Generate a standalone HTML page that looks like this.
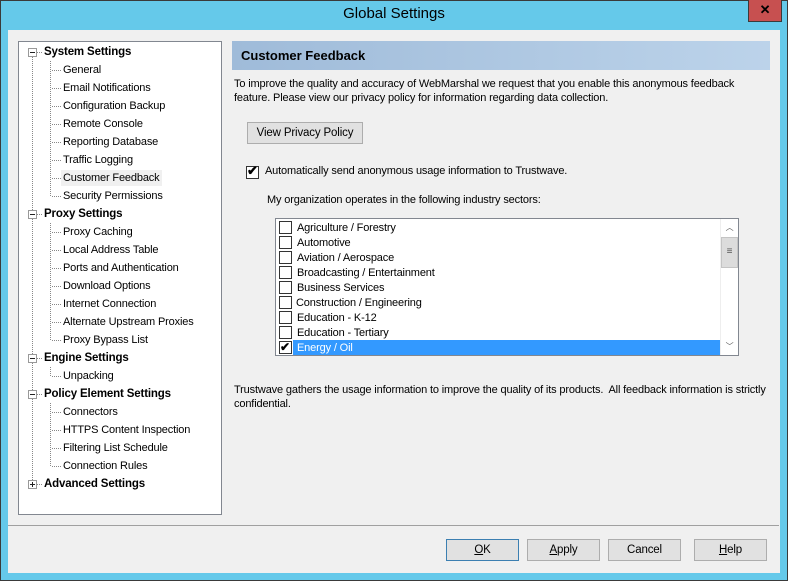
<!DOCTYPE html><html><head><style>
*{margin:0;padding:0;box-sizing:border-box}
body{width:788px;height:581px;overflow:hidden;background:#65c9ea;font-family:"Liberation Sans",sans-serif;font-size:11px;letter-spacing:-0.15px;color:#000;position:relative}
.a{position:absolute;white-space:nowrap}
.win{position:absolute;left:0;top:0;width:788px;height:581px;border:1px solid #3a3a3a}
.title{left:0;top:5px;width:788px;text-align:center;font-size:15px;letter-spacing:0}
.client{left:8px;top:30px;width:772px;height:543px;background:#f0f0f0}
.tree{left:18px;top:41px;width:204px;height:474px;background:#fff;border:1px solid #828790}
.ti{height:16px;line-height:16px}
.b{font-weight:bold;font-size:11.5px}
.btn{position:absolute;height:22px;background:#e1e1e1;border:1px solid #adadad;text-align:center;line-height:20px;font-size:11.5px}
.cb{position:absolute;width:13px;height:13px;border:1px solid #333;background:#fff}
.row{position:absolute;left:0;height:15px;line-height:16px;width:445px}
.row span{position:absolute;left:20px}
</style></head><body>
<div class="win"></div>
<div class="a title">Global Settings</div>
<div class="a" style="left:748px;top:0;width:34px;height:22px;background:#c75050;border:1px solid #3a3a3a;border-top:none;color:#000;text-align:center;font-weight:bold;font-size:13px;line-height:20px">✕</div>
<div class="a client"></div>
<div class="a tree"></div>
<svg class="a" style="left:18px;top:41px" width="204" height="474">
<g stroke="#888" stroke-dasharray="1,1" fill="none">
<line x1="14.5" y1="16" x2="14.5" y2="443"/>
<line x1="32.5" y1="20" x2="32.5" y2="155"/>
<line x1="32.5" y1="182" x2="32.5" y2="299"/>
<line x1="32.5" y1="326" x2="32.5" y2="335"/>
<line x1="32.5" y1="362" x2="32.5" y2="425"/>
</g>
<g stroke="#888" stroke-dasharray="1,1">
<line x1="19" y1="11.5" x2="25" y2="11.5"/><line x1="19" y1="173.5" x2="25" y2="173.5"/><line x1="19" y1="317.5" x2="25" y2="317.5"/><line x1="19" y1="353.5" x2="25" y2="353.5"/><line x1="19" y1="443.5" x2="25" y2="443.5"/>
</g>
<g fill="#fff" stroke="#999">
<rect x="10.5" y="7.5" width="8" height="8"/><rect x="10.5" y="169.5" width="8" height="8"/><rect x="10.5" y="313.5" width="8" height="8"/><rect x="10.5" y="349.5" width="8" height="8"/><rect x="10.5" y="439.5" width="8" height="8"/>
</g>
<g stroke="#222"><line x1="12" y1="11.5" x2="17" y2="11.5"/><line x1="12" y1="173.5" x2="17" y2="173.5"/><line x1="12" y1="317.5" x2="17" y2="317.5"/><line x1="12" y1="353.5" x2="17" y2="353.5"/><line x1="12" y1="443.5" x2="17" y2="443.5"/><line x1="14.5" y1="441" x2="14.5" y2="446"/></g>
<g stroke="#888" stroke-dasharray="1,1">
<line x1="34" y1="29.5" x2="43" y2="29.5"/><line x1="34" y1="47.5" x2="43" y2="47.5"/><line x1="34" y1="65.5" x2="43" y2="65.5"/><line x1="34" y1="83.5" x2="43" y2="83.5"/><line x1="34" y1="101.5" x2="43" y2="101.5"/><line x1="34" y1="119.5" x2="43" y2="119.5"/><line x1="34" y1="137.5" x2="43" y2="137.5"/><line x1="34" y1="155.5" x2="43" y2="155.5"/>
<line x1="34" y1="191.5" x2="43" y2="191.5"/><line x1="34" y1="209.5" x2="43" y2="209.5"/><line x1="34" y1="227.5" x2="43" y2="227.5"/><line x1="34" y1="245.5" x2="43" y2="245.5"/><line x1="34" y1="263.5" x2="43" y2="263.5"/><line x1="34" y1="281.5" x2="43" y2="281.5"/><line x1="34" y1="299.5" x2="43" y2="299.5"/>
<line x1="34" y1="335.5" x2="43" y2="335.5"/>
<line x1="34" y1="371.5" x2="43" y2="371.5"/><line x1="34" y1="389.5" x2="43" y2="389.5"/><line x1="34" y1="407.5" x2="43" y2="407.5"/><line x1="34" y1="425.5" x2="43" y2="425.5"/>
</g>
</svg>
<div class="a ti b" style="left:44px;top:44px">System Settings</div>
<div class="a ti" style="left:63px;top:62px">General</div>
<div class="a ti" style="left:63px;top:80px">Email Notifications</div>
<div class="a ti" style="left:63px;top:98px">Configuration Backup</div>
<div class="a ti" style="left:63px;top:116px">Remote Console</div>
<div class="a ti" style="left:63px;top:134px">Reporting Database</div>
<div class="a ti" style="left:63px;top:152px">Traffic Logging</div>
<div class="a ti" style="left:61px;top:170px;background:#f0f0f0;padding:0 2px">Customer Feedback</div>
<div class="a ti" style="left:63px;top:188px">Security Permissions</div>
<div class="a ti b" style="left:44px;top:206px">Proxy Settings</div>
<div class="a ti" style="left:63px;top:224px">Proxy Caching</div>
<div class="a ti" style="left:63px;top:242px">Local Address Table</div>
<div class="a ti" style="left:63px;top:260px">Ports and Authentication</div>
<div class="a ti" style="left:63px;top:278px">Download Options</div>
<div class="a ti" style="left:63px;top:296px">Internet Connection</div>
<div class="a ti" style="left:63px;top:314px">Alternate Upstream Proxies</div>
<div class="a ti" style="left:63px;top:332px">Proxy Bypass List</div>
<div class="a ti b" style="left:44px;top:350px">Engine Settings</div>
<div class="a ti" style="left:63px;top:368px">Unpacking</div>
<div class="a ti b" style="left:44px;top:386px">Policy Element Settings</div>
<div class="a ti" style="left:63px;top:404px">Connectors</div>
<div class="a ti" style="left:63px;top:422px">HTTPS Content Inspection</div>
<div class="a ti" style="left:63px;top:440px">Filtering List Schedule</div>
<div class="a ti" style="left:63px;top:458px">Connection Rules</div>
<div class="a ti b" style="left:44px;top:476px">Advanced Settings</div>

<div class="a" style="left:232px;top:41px;width:538px;height:29px;background:linear-gradient(90deg,#9fbbd9,#bcd3ea)"></div>
<div class="a b" style="left:241px;top:48px;font-size:13px;letter-spacing:0">Customer Feedback</div>
<div class="a" style="left:234px;top:77px;line-height:14px">To improve the quality and accuracy of WebMarshal we request that you enable this anonymous feedback<br>feature. Please view our privacy policy for information regarding data collection.</div>
<div class="btn" style="left:247px;top:122px;width:116px">View Privacy Policy</div>
<div class="cb" style="left:246px;top:166px"></div>
<div class="a" style="left:247px;top:163px;font-size:13px;font-weight:bold">✔</div>
<div class="a" style="left:265px;top:165px">Automatically send anonymous usage information to Trustwave.</div>
<div class="a" style="left:267px;top:194px">My organization operates in the following industry sectors:</div>
<div class="a" style="left:275px;top:218px;width:464px;height:138px;background:#fff;border:1px solid #828790">
<div style="position:absolute;left:1px;top:1px">
<div class="row" style="top:0"><div class="cb" style="left:2px;top:1px"></div><span>Agriculture / Forestry</span></div>
<div class="row" style="top:15px"><div class="cb" style="left:2px;top:1px"></div><span>Automotive</span></div>
<div class="row" style="top:30px"><div class="cb" style="left:2px;top:1px"></div><span>Aviation / Aerospace</span></div>
<div class="row" style="top:45px"><div class="cb" style="left:2px;top:1px"></div><span>Broadcasting / Entertainment</span></div>
<div class="row" style="top:60px"><div class="cb" style="left:2px;top:1px"></div><span>Business Services</span></div>
<div class="row" style="top:75px"><div class="cb" style="left:2px;top:1px"></div><span style="left:19px">Construction / Engineering</span></div>
<div class="row" style="top:90px"><div class="cb" style="left:2px;top:1px"></div><span>Education - K-12</span></div>
<div class="row" style="top:105px"><div class="cb" style="left:2px;top:1px"></div><span>Education - Tertiary</span></div>
<div class="row" style="top:120px"><div style="position:absolute;left:16px;top:0;width:427px;height:15px;background:#3399ff"></div><div class="cb" style="left:2px;top:1px"></div><div style="position:absolute;left:3px;top:-1px;font-size:12px;font-weight:bold">✔</div><span style="color:#fff">Energy / Oil</span></div>
</div>
<div style="position:absolute;left:444px;top:0;width:18px;height:136px;background:#fff;border-left:1px solid #eee">
<div style="position:absolute;left:0;top:0;width:17px;height:17px;text-align:center;font-size:8px;color:#555;line-height:17px">︿</div>
<div style="position:absolute;left:0;top:18px;width:17px;height:31px;background:#dcdcdc;border:1px solid #c4c4c4;text-align:center;line-height:28px;color:#555;font-size:10px">≡</div>
<div style="position:absolute;left:0;top:119px;width:17px;height:17px;text-align:center;font-size:8px;color:#555;line-height:17px">﹀</div>
</div>
</div>
<div class="a" style="left:234px;top:383px;line-height:14px">Trustwave gathers the usage information to improve the quality of its products.&nbsp; All feedback information is strictly<br>confidential.</div>
<div class="a" style="left:8px;top:525px;width:771px;height:1px;background:#a0a0a0"></div>
<div class="btn" style="left:446px;top:539px;width:73px;border-color:#3c7fb1"><u>O</u>K</div>
<div class="btn" style="left:527px;top:539px;width:73px"><u>A</u>pply</div>
<div class="btn" style="left:608px;top:539px;width:73px">Cancel</div>
<div class="btn" style="left:694px;top:539px;width:73px"><u>H</u>elp</div>
</body></html>
